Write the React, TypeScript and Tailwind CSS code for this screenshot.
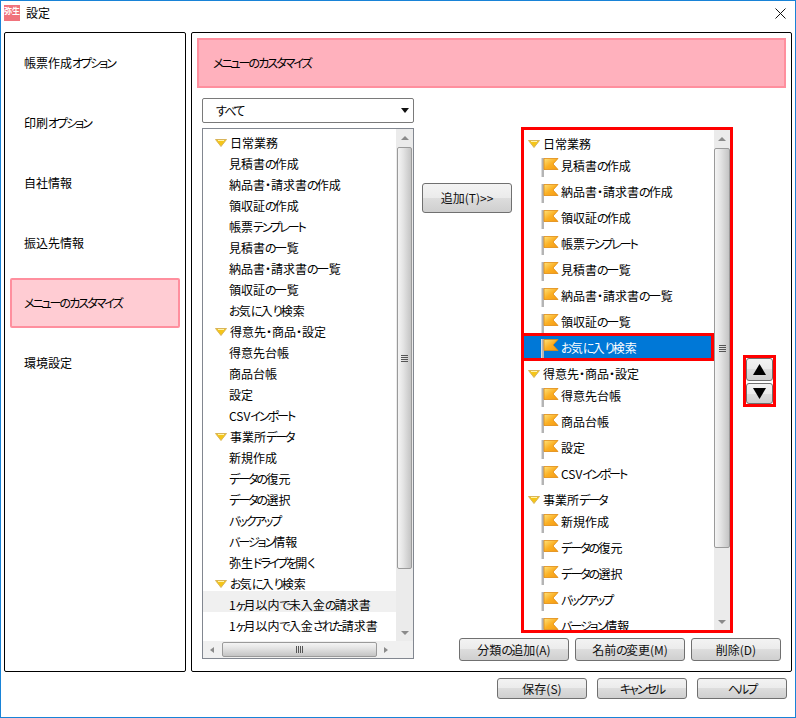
import React from 'react';

const menuItems = ['帳票作成オプション', '印刷オプション', '自社情報', '振込先情報', 'メニューのカスタマイズ', '環境設定'];

const leftRows: { label: string; group?: boolean; hover?: boolean }[] = [
  { label: '日常業務', group: true },
  { label: '見積書の作成' },
  { label: '納品書・請求書の作成' },
  { label: '領収証の作成' },
  { label: '帳票テンプレート' },
  { label: '見積書の一覧' },
  { label: '納品書・請求書の一覧' },
  { label: '領収証の一覧' },
  { label: 'お気に入り検索' },
  { label: '得意先・商品・設定', group: true },
  { label: '得意先台帳' },
  { label: '商品台帳' },
  { label: '設定' },
  { label: 'CSVインポート' },
  { label: '事業所データ', group: true },
  { label: '新規作成' },
  { label: 'データの復元' },
  { label: 'データの選択' },
  { label: 'バックアップ' },
  { label: 'バージョン情報' },
  { label: '弥生ドライブを開く' },
  { label: 'お気に入り検索', group: true },
  { label: '1ヶ月以内で未入金の請求書', hover: true },
  { label: '1ヶ月以内で入金された請求書' },
];

const rightRows = leftRows.slice(0, 20);

const buttonClass =
  'flex items-center justify-center rounded-[3px] border border-[#707070] bg-[linear-gradient(#f3f3f3,#ebebeb_50%,#dddddd_50%,#cfcfcf)] text-[12px] text-[#111]';

// かなはMeiryo UIに合わせて字間を詰める
function Label({ text }: { text: string }) {
  const runs = text.split(/([ァ-ヶー]+|[ぁ-ん]+)/).filter(Boolean);
  return (
    <span className="whitespace-nowrap">
      {runs.map((run, i) => {
        if (/^[ァ-ヶー]/.test(run)) {
          return (
            <span key={i} className="tracking-[-2px]">
              {run}
            </span>
          );
        }
        if (/^[ぁ-ん]/.test(run)) {
          return (
            <span key={i} className="tracking-[-1.75px]">
              {run}
            </span>
          );
        }
        return <span key={i}>{run}</span>;
      })}
    </span>
  );
}

function Triangle() {
  return (
    <svg width="12" height="8" viewBox="0 0 12 8" className="shrink-0">
      <path d="M0.5 0.5H11.5L6 7.5Z" fill="#f5c518" stroke="#d8b45a" />
      <path d="M3 1.5H9" stroke="#fff3a8" />
    </svg>
  );
}

function Flag() {
  return (
    <svg width="18" height="20" viewBox="0 0 18 20" className="mt-[3px] shrink-0">
      <defs>
        <linearGradient id="flag-fill" x1="0" y1="0" x2="1" y2="1">
          <stop offset="0" stopColor="#ffe27a" />
          <stop offset="0.5" stopColor="#fbb024" />
          <stop offset="1" stopColor="#f59a12" />
        </linearGradient>
      </defs>
      <rect x="0" y="0" width="3" height="19" fill="#b4b4b4" />
      <rect x="0" y="0" width="1" height="19" fill="#dcdcdc" />
      <path d="M3 0.5H17L12 6L17 11.5H3Z" fill="url(#flag-fill)" stroke="#e08a10" strokeWidth="0.8" />
    </svg>
  );
}

function ArrowGlyph({ dir }: { dir: 'up' | 'down' | 'left' | 'right' }) {
  const points = {
    up: 'M0 5L4 1L8 5Z',
    down: 'M0 1L4 5L8 1Z',
    left: 'M5 0L1 3L5 6Z',
    right: 'M1 0L5 3L1 6Z',
  }[dir];
  return (
    <svg width="8" height="6" viewBox="0 0 8 6">
      <path d={points} fill="#8a8a8a" />
    </svg>
  );
}

function VScrollbar({ thumbClass, widthClass }: { thumbClass: string; widthClass: string }) {
  return (
    <div className={`flex shrink-0 flex-col items-center bg-[#ebebeb] ${widthClass}`}>
      <div className="flex h-[18px] shrink-0 items-center justify-center">
        <ArrowGlyph dir="up" />
      </div>
      <div
        className={`flex w-full shrink-0 items-center justify-center rounded-[2px] border border-[#9a9a9a] bg-[linear-gradient(90deg,#f4f4f4,#e4e4e4_40%,#c4c4c4)] ${thumbClass}`}
      >
        <div className="flex flex-col gap-[1px]">
          <div className="h-[1px] w-[7px] bg-[#555]" />
          <div className="h-[1px] w-[7px] bg-[#555]" />
          <div className="h-[1px] w-[7px] bg-[#555]" />
          <div className="h-[1px] w-[7px] bg-[#555]" />
        </div>
      </div>
      <div className="flex-1" />
      <div className="flex h-[17px] shrink-0 items-center justify-center">
        <ArrowGlyph dir="down" />
      </div>
    </div>
  );
}

export default function App() {
  return (
    <div className="flex h-[718px] w-[796px] flex-col border border-[#1883d7] bg-white font-['Noto_Sans_CJK_JP',sans-serif] text-[12px] leading-none text-black [font-feature-settings:'palt']">
      {/* タイトルバー */}
      <div className="flex h-[31px] shrink-0 items-center justify-between pb-[7px] pl-[3px] pr-[9px]">
        <div className="flex items-center gap-[6px]">
          <div className="flex h-[16px] w-[16px] items-start justify-center bg-[#f0737c] pt-[2px] text-[8px] font-bold text-white">
            弥生
          </div>
          <span className="text-[12px]">設定</span>
        </div>
        <svg width="11" height="11" viewBox="0 0 11 11">
          <path d="M0.5 0.5L10.5 10.5M10.5 0.5L0.5 10.5" stroke="#111" strokeWidth="1" />
        </svg>
      </div>

      <div className="flex h-[640px] shrink-0 gap-[5px] pl-[3px]">
        {/* 左メニュー */}
        <div className="flex w-[182px] flex-col gap-[10px] rounded-[2px] border border-black px-[5px] pt-[5px]">
          {menuItems.map((item) => (
            <div
              key={item}
              className={
                item === 'メニューのカスタマイズ'
                  ? 'flex h-[50px] items-center rounded-[2px] border-2 border-[#ff8f9e] bg-[#ffccd3] pl-[12px]'
                  : 'flex h-[50px] items-center pl-[14px]'
              }
            >
              <Label text={item} />
            </div>
          ))}
        </div>

        {/* 右パネル */}
        <div className="flex w-[601px] flex-col rounded-[2px] border border-black px-[5px] pt-[5px]">
          <div className="flex h-[50px] shrink-0 items-center border-2 border-[#ff8f9e] bg-[#ffb1bd] pl-[14px]">
            <Label text="メニューのカスタマイズ" />
          </div>

          <div className="flex flex-1 pl-[5px]">
            <div className="flex w-[212px] shrink-0 flex-col pt-[10px]">
              <div className="flex h-[25px] items-center justify-between rounded-[2px] border border-[#7a7a7a] pl-[13px] pr-[4px]">
                <Label text="すべて" />
                <svg width="8" height="5" viewBox="0 0 8 5">
                  <path d="M0 0H8L4 5Z" fill="#111" />
                </svg>
              </div>
              <div className="mt-[5px] flex h-[531px] flex-col border border-[#828790]">
                <div className="flex min-h-0 flex-1">
                  <div className="flex-1 overflow-hidden">
                    {leftRows.map((row) => (
                      <div
                        key={row.label + String(row.group)}
                        className={`flex h-[21px] items-center pt-[6px] ${row.hover ? 'bg-[#f0f0f0]' : ''} ${row.group ? 'gap-[3px] pl-[12px]' : 'pl-[26px]'}`}
                      >
                        {row.group && <Triangle />}
                        <Label text={row.label} />
                      </div>
                    ))}
                  </div>
                  <VScrollbar thumbClass="h-[422px]" widthClass="w-[17px] px-[1px]" />
                </div>
                <div className="flex h-[17px] shrink-0 items-center bg-[#f0f0f0]">
                  <div className="flex w-[19px] justify-center">
                    <ArrowGlyph dir="left" />
                  </div>
                  <div className="flex h-[15px] w-[155px] items-center justify-center gap-[1px] rounded-[2px] border border-[#9a9a9a] bg-[linear-gradient(#f4f4f4,#e4e4e4_40%,#c4c4c4)]">
                    <div className="h-[7px] w-[1px] bg-[#555]" />
                    <div className="h-[7px] w-[1px] bg-[#555]" />
                    <div className="h-[7px] w-[1px] bg-[#555]" />
                    <div className="h-[7px] w-[1px] bg-[#555]" />
                  </div>
                  <div className="flex w-[19px] justify-center">
                    <ArrowGlyph dir="right" />
                  </div>
                </div>
              </div>
            </div>

            <div className="flex flex-1 flex-col">
              <div className="flex">
                <div className={`${buttonClass} ml-[8px] mt-[95px] h-[30px] w-[90px]`}>
                  <Label text="追加(T)>>" />
                </div>
                <div className="ml-[9px] mt-[39px] flex h-[506px] w-[212px] border-[3px] border-[#ff0000]">
                  <div className="flex-1 overflow-hidden pt-[1px]">
                    {rightRows.map((row, i) => {
                      if (row.group) {
                        return (
                          <div key={row.label + i} className="flex h-[22px] items-center gap-[3px] pl-[4px] pt-[4px]">
                            <Triangle />
                            <Label text={row.label} />
                          </div>
                        );
                      }
                      if (i === 8) {
                        return (
                          <div
                            key={row.label + i}
                            className="-mt-[2px] flex h-[28px] items-center gap-[2px] border-y-[3px] border-r-[3px] border-[#ff0000] bg-[#0078d7] pl-[17px] pt-[1px] text-white"
                          >
                            <Flag />
                            <Label text={row.label} />
                          </div>
                        );
                      }
                      return (
                        <div key={row.label + i} className="flex h-[26px] items-center gap-[2px] pl-[17px]">
                          <Flag />
                          <Label text={row.label} />
                        </div>
                      );
                    })}
                  </div>
                  <VScrollbar thumbClass="h-[400px]" widthClass="w-[16px]" />
                </div>
                <div className="ml-[10px] mt-[267px] flex h-[52px] w-[33px] flex-col gap-[2px] border-[3px] border-[#ff0000]">
                  <div className={`${buttonClass} h-[23px]`}>
                    <svg width="13" height="11" viewBox="0 0 13 11">
                      <path d="M6.5 0L13 11H0Z" fill="#000" />
                    </svg>
                  </div>
                  <div className={`${buttonClass} h-[21px]`}>
                    <svg width="13" height="11" viewBox="0 0 13 11">
                      <path d="M0 0H13L6.5 11Z" fill="#000" />
                    </svg>
                  </div>
                </div>
              </div>
              <div className="mt-[5px] flex justify-end gap-[6px] pr-[5px]">
                <div className={`${buttonClass} h-[23px] w-[110px]`}>
                  <Label text="分類の追加(A)" />
                </div>
                <div className={`${buttonClass} h-[23px] w-[110px]`}>
                  <Label text="名前の変更(M)" />
                </div>
                <div className={`${buttonClass} h-[23px] w-[90px]`}>
                  <Label text="削除(D)" />
                </div>
              </div>
            </div>
          </div>
        </div>
      </div>

      <div className="flex justify-end gap-[10px] pr-[8px] pt-[6px]">
        <div className={`${buttonClass} h-[21px] w-[90px]`}>
          <Label text="保存(S)" />
        </div>
        <div className={`${buttonClass} h-[21px] w-[90px]`}>
          <Label text="キャンセル" />
        </div>
        <div className={`${buttonClass} h-[21px] w-[90px]`}>
          <Label text="ヘルプ" />
        </div>
      </div>
    </div>
  );
}
